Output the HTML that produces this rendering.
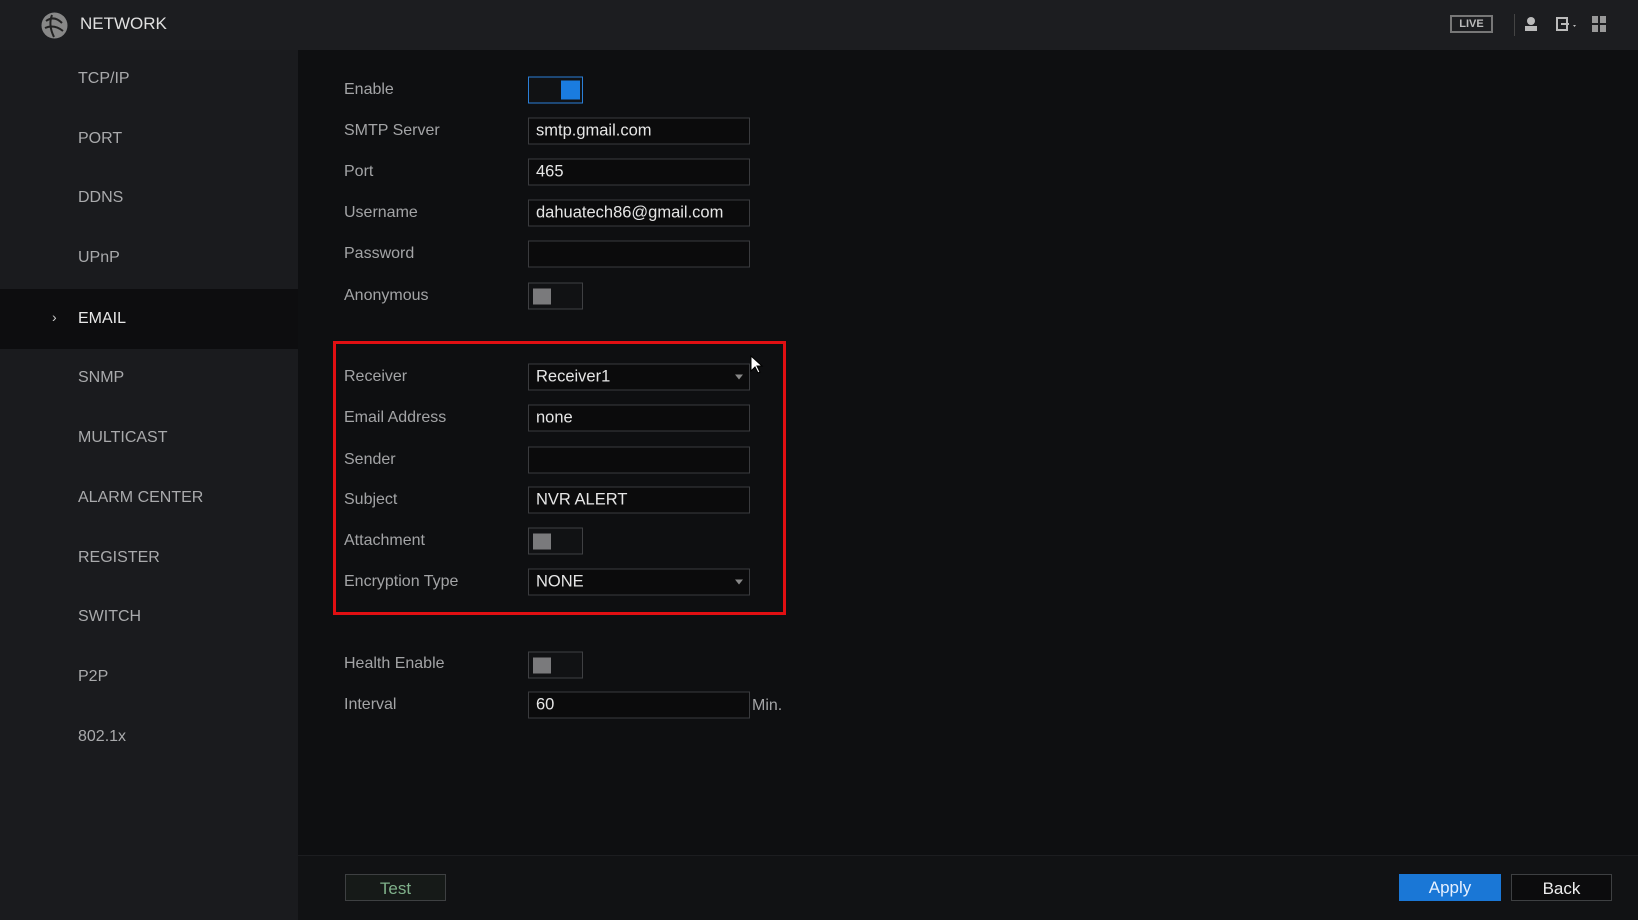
<!DOCTYPE html>
<html><head><style>
*{margin:0;padding:0;box-sizing:border-box}
body{width:1638px;height:920px;background:#0e0f11;font-family:"Liberation Sans",sans-serif;color:#b8b9bb;position:relative;overflow:hidden}
.top{position:absolute;left:0;top:0;width:1638px;height:50px;background:#1c1d20}
.side{position:absolute;left:0;top:50px;width:298px;height:870px;background:#1a1b1e}
.mi{position:absolute;left:78px;font-size:16px;color:#a9aaac;transform:translateY(-50%)}
.act{position:absolute;left:0;top:289px;width:298px;height:60px;background:#0d0d0f}
.lb{position:absolute;left:344px;font-size:16px;color:#a3a4a6;transform:translateY(-50%)}
.in{position:absolute;left:528px;width:222px;height:27px;border:1px solid #3a3b3e;background:#0b0b0c;color:#e6e6e6;font-size:16.5px;padding-left:7px;line-height:25px;transform:translateY(-50%)}
.tg{position:absolute;left:528px;width:55px;height:27px;border:1px solid #3f4043;background:#111214;transform:translateY(-50%)}
.tg i{position:absolute;left:4px;top:5px;width:18px;height:16px;background:#7a7a7c}
.tg.on{border-color:#2a7fd8}
.tg.on i{left:32px;top:3px;width:19px;height:19px;background:#1a7ce0}
.arr{position:absolute;right:6px;top:10px;border:4px solid transparent;border-top:5px solid #888}
.btn{position:absolute;top:874px;height:27px;font-size:17px;text-align:center;line-height:27px}
</style></head><body>
<div class="top"></div>
<svg style="position:absolute;left:40px;top:11px" width="29" height="29" viewBox="0 0 29 29"><circle cx="14.5" cy="14.5" r="13" fill="#888"/><path d="M6 10q8-6 16 2M5 17q9-4 18 3M12 4q-4 10 2 22" stroke="#222" stroke-width="2" fill="none"/></svg>
<div style="position:absolute;left:80px;top:14px;font-size:17px;color:#e0e0e0">NETWORK</div>
<div style="position:absolute;left:1450px;top:15px;width:43px;height:18px;border:2px solid #777;color:#bbb;font-size:11px;font-weight:bold;text-align:center;line-height:14px">LIVE</div>
<div style="position:absolute;left:1514px;top:14px;width:1px;height:22px;background:#444"></div>
<svg style="position:absolute;left:1524px;top:16px" width="14" height="16"><circle cx="7" cy="5" r="4" fill="#bbb"/><rect x="1" y="10" width="12" height="5" fill="#bbb"/></svg>
<svg style="position:absolute;left:1556px;top:17px" width="22" height="15"><rect x="1" y="1" width="10" height="12" stroke="#bbb" stroke-width="2" fill="none"/><path d="M5 7h8" stroke="#bbb" stroke-width="2"/><path d="M17 8l3 0-1.5 2z" fill="#bbb"/></svg>
<svg style="position:absolute;left:1592px;top:16px" width="14" height="16"><rect x="0" y="0" width="6" height="7" fill="#999"/><rect x="8" y="0" width="6" height="7" fill="#999"/><rect x="0" y="9" width="6" height="7" fill="#999"/><rect x="8" y="9" width="6" height="7" fill="#999"/></svg>
<div class="side"></div>
<div class="act"></div>
<div class="mi" style="top:79px">TCP/IP</div>
<div class="mi" style="top:139px">PORT</div>
<div class="mi" style="top:198px">DDNS</div>
<div class="mi" style="top:258px">UPnP</div>
<div class="mi" style="top:319px;color:#e8e8e8">EMAIL</div>
<div style="position:absolute;left:52px;top:309px;font-size:14px;color:#ccc">›</div>
<div class="mi" style="top:378px">SNMP</div>
<div class="mi" style="top:438px">MULTICAST</div>
<div class="mi" style="top:498px">ALARM CENTER</div>
<div class="mi" style="top:558px">REGISTER</div>
<div class="mi" style="top:617px">SWITCH</div>
<div class="mi" style="top:677px">P2P</div>
<div class="mi" style="top:737px">802.1x</div>

<div class="lb" style="top:90px">Enable</div><div class="tg on" style="top:90px"><i></i></div>
<div class="lb" style="top:131px">SMTP Server</div><div class="in" style="top:131px">smtp.gmail.com</div>
<div class="lb" style="top:172px">Port</div><div class="in" style="top:172px">465</div>
<div class="lb" style="top:213px">Username</div><div class="in" style="top:213px">dahuatech86@gmail.com</div>
<div class="lb" style="top:254px">Password</div><div class="in" style="top:254px"></div>
<div class="lb" style="top:296px">Anonymous</div><div class="tg" style="top:296px"><i></i></div>

<div style="position:absolute;left:333px;top:341px;width:453px;height:274px;border:3px solid #e00f12"></div>
<div class="lb" style="top:377px">Receiver</div><div class="in" style="top:377px">Receiver1<span class="arr"></span></div>
<div class="lb" style="top:418px">Email Address</div><div class="in" style="top:418px">none</div>
<div class="lb" style="top:460px">Sender</div><div class="in" style="top:460px"></div>
<div class="lb" style="top:500px">Subject</div><div class="in" style="top:500px">NVR ALERT</div>
<div class="lb" style="top:541px">Attachment</div><div class="tg" style="top:541px"><i></i></div>
<div class="lb" style="top:582px">Encryption Type</div><div class="in" style="top:582px">NONE<span class="arr"></span></div>
<svg style="position:absolute;left:750px;top:355px" width="14" height="20"><path d="M1 1v15l4-4 3 6 2-1-3-6h5z" fill="#fff" stroke="#000"/></svg>

<div class="lb" style="top:664px">Health Enable</div><div class="tg" style="top:665px"><i></i></div>
<div class="lb" style="top:705px">Interval</div><div class="in" style="top:705px">60</div>
<div class="lb" style="top:706px;left:752px">Min.</div>

<div style="position:absolute;left:298px;top:855px;width:1340px;height:65px;background:#111214;border-top:1px solid #1c1d20"></div>
<div class="btn" style="left:345px;width:101px;border:1px solid #3e4042;background:#161a18;color:#7fb08a">Test</div>
<div class="btn" style="left:1399px;width:102px;background:#1a77d6;color:#e6f0ff">Apply</div>
<div class="btn" style="left:1511px;width:101px;border:1px solid #3e4042;background:#0c0c0d;color:#eee">Back</div>
</body></html>
